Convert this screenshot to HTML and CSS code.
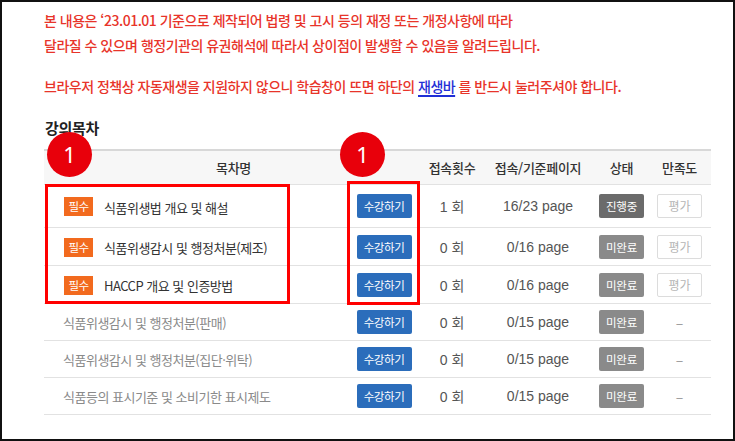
FILE: index.html
```html
<!DOCTYPE html>
<html lang="ko">
<head>
<meta charset="utf-8">
<link rel="stylesheet" href="styles.css">
</head>
<body>
<div class="frame">
  <div class="notice">
    <p class="notice-p">본 내용은 ‘23.01.01 기준으로 제작되어 법령 및 고시 등의 재정 또는 개정사항에 따라<br>달라질 수 있으며 행정기관의 유권해석에 따라서 상이점이 발생할 수 있음을 알려드립니다.</p>
    <p class="notice-p notice-gap">브라우저 정책상 자동재생을 지원하지 않으니 학습창이 뜨면 하단의 <span class="link">재생바</span> 를 반드시 눌러주셔야 합니다.</p>
  </div>
  <h2 class="title">강의목차</h2>
  <div class="toc-wrap">
    <table class="toc">
      <colgroup>
        <col class="c-name"><col class="c-btn"><col class="c-cnt"><col class="c-page"><col class="c-state"><col class="c-rate">
      </colgroup>
      <thead>
        <tr><th colspan="2">목차명</th><th>접속횟수</th><th>접속/기준페이지</th><th>상태</th><th>만족도</th></tr>
      </thead>
      <tbody>
        <tr class="r1">
          <td class="name"><span class="req">필수</span><span class="nm">식품위생법 개요 및 해설</span></td>
          <td><span class="btn">수강하기</span></td>
          <td class="num">1 회</td><td class="num">16/23 page</td>
          <td><span class="state dark">진행중</span></td>
          <td><span class="eval">평가</span></td>
        </tr>
        <tr class="r2">
          <td class="name"><span class="req">필수</span><span class="nm">식품위생감시 및 행정처분(제조)</span></td>
          <td><span class="btn">수강하기</span></td>
          <td class="num">0 회</td><td class="num">0/16 page</td>
          <td><span class="state">미완료</span></td>
          <td><span class="eval">평가</span></td>
        </tr>
        <tr class="r2">
          <td class="name"><span class="req">필수</span><span class="nm">HACCP 개요 및 인증방법</span></td>
          <td><span class="btn">수강하기</span></td>
          <td class="num">0 회</td><td class="num">0/16 page</td>
          <td><span class="state">미완료</span></td>
          <td><span class="eval">평가</span></td>
        </tr>
        <tr class="r3">
          <td class="name muted">식품위생감시 및 행정처분(판매)</td>
          <td><span class="btn">수강하기</span></td>
          <td class="num">0 회</td><td class="num">0/15 page</td>
          <td><span class="state">미완료</span></td>
          <td class="dash">–</td>
        </tr>
        <tr class="r3">
          <td class="name muted">식품위생감시 및 행정처분(집단·위탁)</td>
          <td><span class="btn">수강하기</span></td>
          <td class="num">0 회</td><td class="num">0/15 page</td>
          <td><span class="state">미완료</span></td>
          <td class="dash">–</td>
        </tr>
        <tr class="r3">
          <td class="name muted">식품등의 표시기준 및 소비기한 표시제도</td>
          <td><span class="btn">수강하기</span></td>
          <td class="num">0 회</td><td class="num">0/15 page</td>
          <td><span class="state">미완료</span></td>
          <td class="dash">–</td>
        </tr>
      </tbody>
    </table>
    <div class="mark mark-a">1</div>
    <div class="mark mark-b">1</div>
    <div class="hl hl-a"></div>
    <div class="hl hl-b"></div>
  </div>
</div>
</body>
</html>
```

FILE: styles.css
```css
html, body {
  margin: 0;
  padding: 0;
  background: #fff;
}
body {
  font-family: "Noto Sans CJK KR", "Noto Sans", sans-serif;
}
.frame {
  width: 735px;
  height: 441px;
  box-sizing: border-box;
  border: 2px solid #111;
  padding: 6px 0 0 42px;
  overflow: hidden;
}
.notice-p {
  margin: 0;
  color: #e8342a;
  font-size: 14px;
  letter-spacing: -0.5px;
  line-height: 25px;
  font-weight: 500;
}
.notice-gap {
  margin-top: 16px;
}
.link {
  color: #1f2fd6;
  text-decoration: underline;
  text-underline-offset: 3px;
  text-decoration-thickness: 1.5px;
}
.title {
  margin: 19px 0 0 1px;
  font-size: 15px;
  line-height: 20px;
  font-weight: 700;
  color: #222;
  letter-spacing: -0.3px;
}
.toc-wrap {
  position: relative;
  margin: 11px 0 0 0;
  width: 667px;
}
.toc {
  width: 667px;
  table-layout: fixed;
  border-collapse: collapse;
  font-size: 14px;
  color: #444;
}
.c-name { width: 301px; }
.c-btn { width: 78px; }
.c-cnt { width: 58px; }
.c-page { width: 114px; }
.c-state { width: 53px; }
.c-rate { width: 63px; }
.toc th {
  height: 33px;
  padding: 0;
  background: #f7f7f7;
  border-top: 2px solid #d8d8d8;
  border-bottom: 1px solid #e2e2e2;
  font-size: 13px;
  font-weight: 500;
  color: #333;
  text-align: center;
  letter-spacing: -0.3px;
}
.toc td {
  padding: 0;
  text-align: center;
  vertical-align: middle;
  border-bottom: 1px solid #e2e2e2;
  white-space: nowrap;
}
.toc td.num {
  font-family: "Liberation Sans", "Noto Sans CJK KR", sans-serif;
  color: #555;
}
.r1 td { height: 42px; }
.r2 td { height: 37px; }
.r3 td { height: 36px; }
.toc td.name {
  text-align: left;
  padding-left: 20px;
  font-size: 13px;
  letter-spacing: -0.5px;
  color: #333;
}
.toc td.muted {
  padding-left: 19px;
  color: #8a8a8a;
}
.req {
  display: inline-block;
  vertical-align: middle;
  width: 29px;
  height: 19px;
  line-height: 19px;
  background: #f26a1e;
  color: #fff;
  font-size: 11.5px;
  text-align: center;
  letter-spacing: -0.5px;
  margin-right: 11px;
}
.nm {
  vertical-align: middle;
}
.btn {
  display: inline-block;
  width: 55px;
  height: 24px;
  line-height: 24px;
  background: #2b6dbb;
  color: #fff;
  font-size: 11.5px;
  letter-spacing: -0.4px;
  border-radius: 2px;
  text-align: center;
  vertical-align: middle;
}
.state {
  display: inline-block;
  width: 45px;
  height: 24px;
  line-height: 24px;
  background: #8a8a8a;
  color: #fff;
  font-size: 11.5px;
  letter-spacing: -0.3px;
  border-radius: 2px;
  text-align: center;
  vertical-align: middle;
}
.state.dark {
  background: #6b6b6b;
}
.eval {
  display: inline-block;
  box-sizing: border-box;
  width: 45px;
  height: 24px;
  line-height: 22px;
  border: 1px solid #dcdcdc;
  border-radius: 2px;
  color: #b5b5b5;
  font-size: 12px;
  text-align: center;
  vertical-align: middle;
}
.dash {
  color: #999;
}
.mark {
  position: absolute;
  width: 45px;
  height: 45px;
  border-radius: 50%;
  background: #e8000b;
  color: #fff;
  font-family: "Noto Sans", "Liberation Sans", sans-serif;
  font-size: 22px;
  line-height: 45px;
  text-align: center;
  top: -17px;
}
.mark-a { left: 3px; }
.mark-b { left: 296px; }
.hl {
  position: absolute;
  box-sizing: border-box;
  border: 3px solid #f00;
}
.hl-a {
  left: 1px;
  top: 35px;
  width: 245px;
  height: 120px;
}
.hl-b {
  left: 303px;
  top: 32px;
  width: 73px;
  height: 124px;
}
```
